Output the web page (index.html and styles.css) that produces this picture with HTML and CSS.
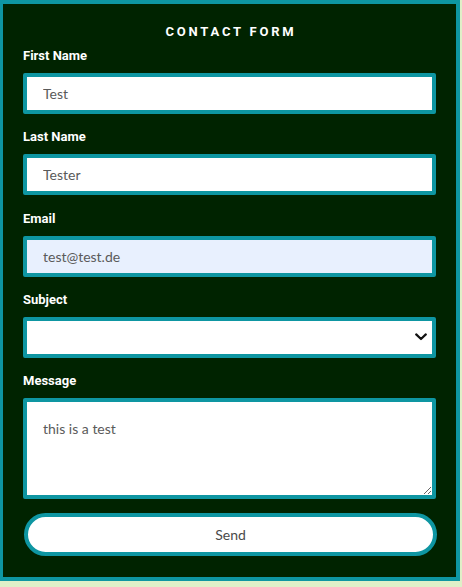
FILE: index.html
```html
<!DOCTYPE html>
<html lang="en">
<head>
<meta charset="utf-8">
<title>Contact Form</title>
<link rel="stylesheet" href="styles.css">
</head>
<body>
<div class="card">
  <h1 class="title">CONTACT FORM</h1>
  <form class="form">
    <div class="field">
      <label class="label" for="first">First Name</label>
      <input class="control" id="first" type="text" value="Test">
    </div>
    <div class="field">
      <label class="label" for="last">Last Name</label>
      <input class="control" id="last" type="text" value="Tester">
    </div>
    <div class="field">
      <label class="label" for="email">Email</label>
      <input class="control control-autofill" id="email" type="email" value="test@test.de">
    </div>
    <div class="field">
      <label class="label" for="subject">Subject</label>
      <div class="select-wrap">
        <select class="control select" id="subject">
          <option value=""></option>
        </select>
        <svg class="chevron" width="12" height="8" viewBox="0 0 12 8" aria-hidden="true">
          <path d="M1.2 1.4 L6 6 L10.8 1.4" fill="none" stroke="#111" stroke-width="2.2" stroke-linecap="round" stroke-linejoin="round"/>
        </svg>
      </div>
    </div>
    <div class="field field-last">
      <label class="label" for="message">Message</label>
      <textarea class="control textarea" id="message">this is a test</textarea>
    </div>
    <button class="send" type="button">Send</button>
  </form>
</div>
</body>
</html>
```

FILE: styles.css
```css
html, body {
  margin: 0;
  padding: 0;
}

body {
  background: #dff0c8;
  width: 462px;
  height: 587px;
}

.card {
  box-sizing: border-box;
  width: 460px;
  height: 581px;
  background: #002300;
  border-style: solid;
  border-color: #0e96a2;
  border-width: 4px 4px 4px 3px;
  padding: 20px 20px 0 20px;
}

.title {
  margin: 0;
  font-family: Roboto, "Liberation Sans", sans-serif;
  font-weight: 700;
  font-size: 13px;
  line-height: 15px;
  letter-spacing: 2.8px;
  color: #ffffff;
  text-align: center;
  padding-left: 3px;
}

.form {
  display: flex;
  flex-direction: column;
  margin-top: 9px;
}

.field {
  display: flex;
  flex-direction: column;
  margin-bottom: 15.25px;
}

.field-last {
  margin-bottom: 14px;
}

.label {
  font-family: Roboto, "Liberation Sans", sans-serif;
  font-weight: 700;
  font-size: 13px;
  line-height: 15px;
  color: #ffffff;
  margin-bottom: 10px;
}

.control {
  box-sizing: border-box;
  width: 413px;
  height: 41px;
  margin: 0;
  border: 4px solid #0e96a2;
  border-radius: 2px;
  background: #ffffff;
  padding: 0 16px;
  font-family: Lato, "Open Sans", sans-serif;
  font-size: 14px;
  color: #5a5a5a;
  outline: none;
}

.control-autofill {
  background: #e8f0fe;
}

.select-wrap {
  position: relative;
  width: 413px;
}

.select {
  appearance: none;
  -webkit-appearance: none;
  display: block;
}

.chevron {
  position: absolute;
  right: 9px;
  top: 16px;
  pointer-events: none;
}

.textarea {
  height: 101px;
  padding: 18px 16px;
  line-height: 17px;
  resize: both;
  display: block;
}

.send {
  box-sizing: border-box;
  width: 413px;
  height: 43px;
  margin: 0 0 0 1px;
  border: 4px solid #0e96a2;
  border-radius: 22px;
  background: #ffffff;
  font-family: Lato, "Open Sans", sans-serif;
  font-size: 14px;
  color: #4a4a4a;
  cursor: pointer;
}
```
